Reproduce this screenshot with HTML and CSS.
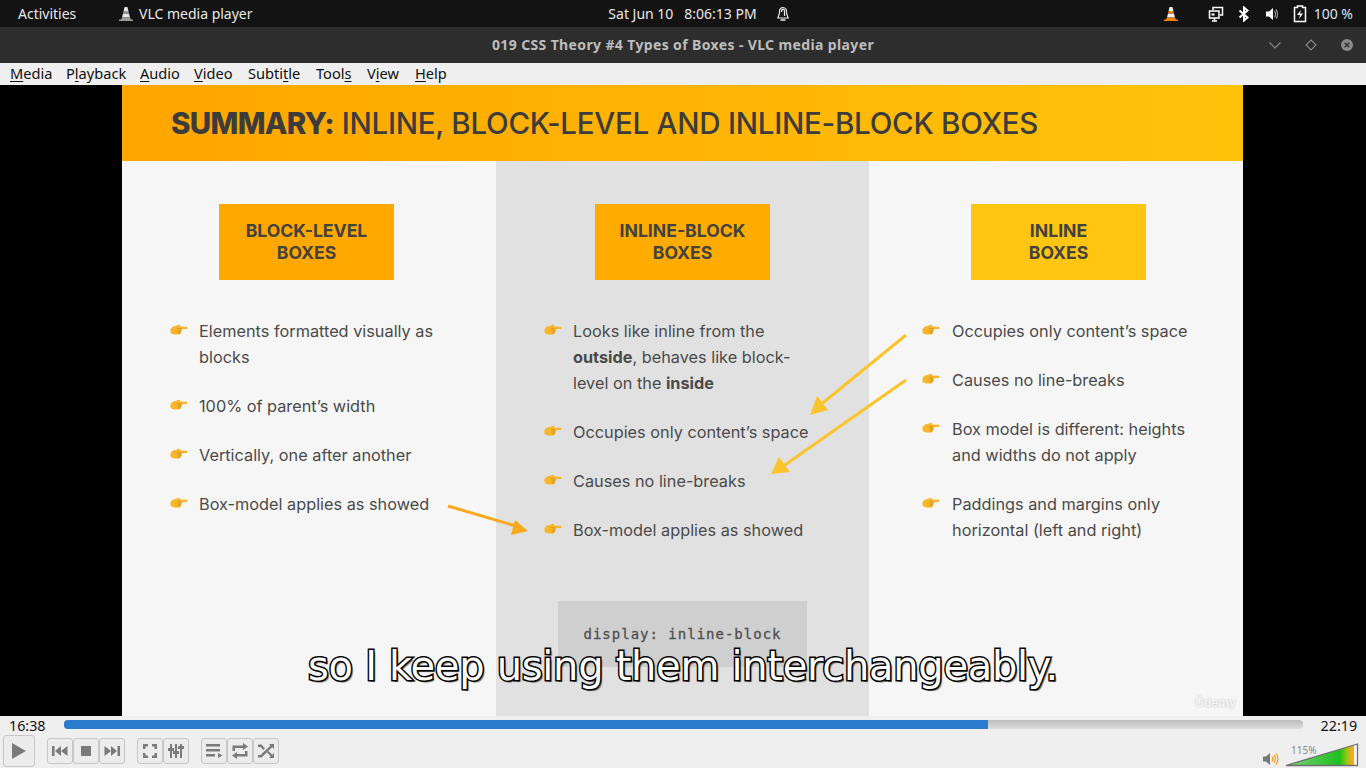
FILE: index.html
```html
<!DOCTYPE html>
<html lang="en">
<head>
<meta charset="utf-8">
<title>VLC media player</title>
<link rel="stylesheet" href="styles.css">
</head>
<body>
<svg class="defs" width="0" height="0" aria-hidden="true">
  <symbol id="hand" viewBox="0 0 18 12">
    <path d="M.5 5.300C1.300 3.300 3.300 2.100 5.600 1.900L9 .8C10 .6 10.600 1.700 10 2.500L16.500 2.700C18 2.800 18 5 16.500 5.100L11.700 5.200C12.100 6 11.900 6.700 11.400 7.100C11.600 7.900 11.200 8.600 10.600 8.800C10.600 9.700 10 10.400 9 10.400H5.500C3.200 10.600 1.100 9.900 .5 8.600Z" fill="#f8b62a"/>
    <path d="M7 4.600C8.200 4.400 9.800 4.600 11.500 5.200M7.500 7C8.800 6.900 10 6.900 11.400 7.100M7.800 8.900L10.600 8.800" fill="none" stroke="#c57f12" stroke-width=".7"/>
  </symbol>
  <symbol id="cone" viewBox="0 0 16 16">
    <path d="M6.600 1h2.800l1 4H5.600zM5 7.500h6l1 4H4z" fill="currentColor"/>
    <path d="M5.600 5h4.800l.6 2.500H5zM4 11.500h8l1 2H15v1.500H1v-1.500h2z" fill="var(--cone2)"/>
  </symbol>
</svg>

<header class="topbar">
  <div class="top-left">
    <span class="activities">Activities</span>
    <span class="app">
      <svg class="app-cone" width="16" height="16"><use href="#cone"/></svg>
      VLC media player
    </span>
  </div>
  <div class="clock">
    <span>Sat Jun 10&nbsp;&nbsp;&nbsp;8:06:13 PM</span>
    <svg width="16" height="16" viewBox="0 0 16 16" fill="none" stroke="#eee" stroke-width="1.200">
      <path d="M8 1.500C5.500 1.500 4.500 3.500 4.500 6C4.500 8.500 3.500 10 2.800 12H13.200C12.500 10 11.500 8.500 11.500 6C11.500 3.500 10.500 1.500 8 1.500Z"/>
      <path d="M6.500 6C6.500 4 7 3.200 8 3.200C9 3.200 9.500 4 9.500 6V10"/>
      <path d="M5.500 14H10.500" stroke-width="1.500"/>
    </svg>
  </div>
  <div class="tray">
    <svg class="tray-cone" width="16" height="16"><use href="#cone"/></svg>
    <svg class="tray-net" width="16" height="16" viewBox="0 0 16 16" fill="none" stroke="#fff" stroke-width="1.500">
      <path d="M5 4V1.500H14.500V9H12"/>
      <rect x="1.500" y="5" width="9.500" height="7"/>
      <path d="M4 15H9M6.500 12V15" />
      <rect x="3.500" y="7.500" width="3" height="2" fill="#fff" stroke="none"/>
    </svg>
    <svg class="tray-bt" width="12" height="16" viewBox="0 0 12 16" fill="none" stroke="#fff" stroke-width="2">
      <path d="M1.500 4.500L9.500 11.500L6 14.500V1.500L9.500 4.500L1.500 11.500"/>
    </svg>
    <svg class="tray-vol" width="14" height="16" viewBox="0 0 14 16">
      <path d="M1 5.500H4L8 2V14L4 10.500H1Z" fill="#fff"/>
      <path d="M9.500 5C10.800 6.500 10.800 9.500 9.500 11M11 3.500C13 5.500 13 10.500 11 12.500" fill="none" stroke="#999" stroke-width="1.200"/>
    </svg>
    <svg class="tray-bat" width="14" height="18" viewBox="0 0 14 18" fill="none">
      <path d="M4.500 1H9.500V2.500H12.500V16.500H1.500V2.500H4.500Z" stroke="#fff" stroke-width="1.500"/>
      <path d="M8 5L4 10H7L6 14L10 8.500H7Z" fill="#fff"/>
    </svg>
    <span class="percent">100 %</span>
  </div>
</header>

<div class="titlebar">
  <span class="title-text">019 CSS Theory #4 Types of Boxes - VLC media player</span>
  <div class="win-buttons">
    <svg width="14" height="14" viewBox="0 0 14 14" fill="none" stroke="#8c8c8c" stroke-width="1.100"><path d="M1.500 4.500L7 10L12.500 4.500"/></svg>
    <svg width="14" height="14" viewBox="0 0 14 14" fill="none" stroke="#8c8c8c" stroke-width="1.100"><path d="M7 2L12 7L7 12L2 7Z"/></svg>
    <svg width="14" height="14" viewBox="0 0 14 14"><circle cx="7" cy="7" r="6" fill="#8a8a8a"/><path d="M4.700 4.700L9.300 9.300M9.300 4.700L4.700 9.300" stroke="#2d2d2d" stroke-width="1.300"/></svg>
  </div>
</div>

<nav class="menubar">
  <span class="m-media"><u>M</u>edia</span>
  <span class="m-playback">P<u>l</u>ayback</span>
  <span class="m-audio"><u>A</u>udio</span>
  <span class="m-video"><u>V</u>ideo</span>
  <span class="m-subtitle">Subti<u>t</u>le</span>
  <span class="m-tools">Tool<u>s</u></span>
  <span class="m-view">V<u>i</u>ew</span>
  <span class="m-help"><u>H</u>elp</span>
</nav>

<main class="video">
  <section class="slide">
    <h1 class="slide-title"><b>SUMMARY:</b> INLINE, BLOCK-LEVEL AND INLINE-BLOCK BOXES</h1>
    <div class="columns">
      <div class="col col-block">
        <div class="box box-block">BLOCK-LEVEL<br>BOXES</div>
        <ul class="points">
          <li><svg class="hand"><use href="#hand"/></svg><span>Elements formatted visually as blocks</span></li>
          <li><svg class="hand"><use href="#hand"/></svg><span>100% of parent’s width</span></li>
          <li><svg class="hand"><use href="#hand"/></svg><span>Vertically, one after another</span></li>
          <li><svg class="hand"><use href="#hand"/></svg><span>Box-model applies as showed</span></li>
        </ul>
      </div>
      <div class="col col-mid">
        <div class="box box-mid">INLINE-BLOCK<br>BOXES</div>
        <ul class="points">
          <li><svg class="hand"><use href="#hand"/></svg><span>Looks like inline from the <b>outside</b>, behaves like block-level on the <b>inside</b></span></li>
          <li><svg class="hand"><use href="#hand"/></svg><span>Occupies only content’s space</span></li>
          <li><svg class="hand"><use href="#hand"/></svg><span>Causes no line-breaks</span></li>
          <li><svg class="hand"><use href="#hand"/></svg><span>Box-model applies as showed</span></li>
        </ul>
        <div class="code">display: inline-block</div>
      </div>
      <div class="col col-inline">
        <div class="box box-inline">INLINE<br>BOXES</div>
        <ul class="points">
          <li><svg class="hand"><use href="#hand"/></svg><span>Occupies only content’s space</span></li>
          <li><svg class="hand"><use href="#hand"/></svg><span>Causes no line-breaks</span></li>
          <li><svg class="hand"><use href="#hand"/></svg><span>Box model is different: heights and widths do not apply</span></li>
          <li><svg class="hand"><use href="#hand"/></svg><span>Paddings and margins only horizontal (left and right)</span></li>
        </ul>
      </div>
    </div>
    <svg class="arrows" width="1121" height="631" viewBox="0 0 1121 631" fill="none" stroke-width="3">
      <path d="M326 421L394 441" stroke="#f9a91c"/>
      <path d="M406 446L389 450L393 435Z" fill="#f9a91c"/>
      <path d="M784 250L697 321" stroke="#fcc42c"/>
      <path d="M688 330L695 311L706 325Z" fill="#fcc42c"/>
      <path d="M784 295L660 382" stroke="#fcc42c"/>
      <path d="M649 389L657 372L668 387Z" fill="#fcc42c"/>
    </svg>
    <span class="watermark">Üdemy</span>
  </section>
  <p class="subtitle">so I keep using them interchangeably.</p>
</main>

<footer class="controls">
  <div class="seek-row">
    <span class="time">16:38</span>
    <div class="seek"><div class="seek-fill"></div></div>
    <span class="time">22:19</span>
  </div>
  <div class="button-row">
    <button class="btn btn-play" aria-label="Play"><svg width="18" height="20" viewBox="0 0 18 20"><path d="M2 2L16 10L2 18Z"/></svg></button>
    <div class="group">
      <button class="btn" aria-label="Previous"><svg width="16" height="12" viewBox="0 0 16 12"><path d="M0 1H2.500V11H0ZM3 6L9 1V11ZM9 6L15.500 1V11Z"/></svg></button>
      <button class="btn" aria-label="Stop"><svg width="12" height="12" viewBox="0 0 12 12"><path d="M1 1H11V11H1Z"/></svg></button>
      <button class="btn" aria-label="Next"><svg width="16" height="12" viewBox="0 0 16 12"><path d="M.5 1L7 6L.5 11ZM7 1L13 6L7 11ZM13.500 1H16V11H13.500Z"/></svg></button>
    </div>
    <div class="group">
      <button class="btn" aria-label="Fullscreen"><svg width="16" height="16" viewBox="0 0 16 16"><path d="M1 1H6V3.500H3.500V6H1ZM10 1H15V6H12.500V3.500H10ZM1 10H3.500V12.500H6V15H1ZM12.500 10H15V15H10V12.500H12.500Z"/></svg></button>
      <button class="btn" aria-label="Extended settings"><svg width="16" height="16" viewBox="0 0 16 16"><path d="M2 1H4V5H6V8H4V15H2V8H0V5H2ZM7 1H9V8H11V11H9V15H7V11H5V8H7ZM12 1H14V3H16V6H14V15H12V6H10V3H12Z"/></svg></button>
    </div>
    <div class="group">
      <button class="btn" aria-label="Playlist"><svg width="18" height="16" viewBox="0 0 18 16"><path d="M1 1H15V3.500H1ZM1 6H15V8.500H1ZM1 11H10V13.500H1ZM13 10L17.500 12.500L13 15Z"/></svg></button>
      <button class="btn" aria-label="Loop"><svg width="18" height="16" viewBox="0 0 18 16"><path d="M12 0L17 3.500L12 7V5H4V8H1.500V2.500H12ZM6 16L1 12.500L6 9V11H14V8H16.500V13.500H6Z"/></svg></button>
      <button class="btn" aria-label="Random"><svg width="18" height="16" viewBox="0 0 18 16"><path d="M1 1.500H4.500L8 5.500L6.500 7L3.500 4H1ZM12 1H17V6L15.200 4.300L4.500 14.500H1V12H3.500L13.500 2.600ZM10 9.500L11.500 8L15.200 11.700L17 10V15H12L13.600 13.300Z"/></svg></button>
    </div>
    <div class="volume">
      <svg class="speaker" width="16" height="14" viewBox="0 0 16 14">
        <path d="M0 4.500H3L7 1V13L3 9.500H0Z" fill="#777"/>
        <path d="M9 4.500C10 6 10 8 9 9.500M11 3C12.700 5.500 12.700 8.500 11 11M13 1.500C15.500 5 15.500 9 13 12.500" fill="none" stroke="#f39a1e" stroke-width="1.200"/>
      </svg>
      <div class="vol-track">
        <span class="vol-label">115%</span>
        <svg width="74" height="24" viewBox="0 0 74 24">
          <defs>
            <linearGradient id="vol" x1="0" y1="0" x2="1" y2="0">
              <stop offset="0" stop-color="#7ed27a"/>
              <stop offset=".75" stop-color="#1fbf1f"/>
              <stop offset=".85" stop-color="#8ccb10"/>
              <stop offset=".92" stop-color="#ffa51e"/>
              <stop offset=".95" stop-color="#ffa51e"/>
              <stop offset=".951" stop-color="#fafafa"/>
            </linearGradient>
          </defs>
          <path d="M1 22.500L72.500 1V22.500Z" fill="url(#vol)" stroke="#6e6e6e" stroke-width="1.300"/>
        </svg>
      </div>
    </div>
  </div>
</footer>
</body>
</html>
```
FILE: styles.css
```css
* { box-sizing: border-box; }
html, body { margin: 0; height: 100%; }
body {
  width: 1366px;
  height: 768px;
  overflow: hidden;
  display: flex;
  flex-direction: column;
  font-family: "Noto Sans", sans-serif;
  background: #000;
}
.defs { display: block; height: 0; flex: none; }

/* GNOME top bar */
.topbar {
  height: 27px;
  flex: none;
  background: #131313;
  color: #e8e8e8;
  font-size: 14px;
  display: grid;
  grid-template-columns: 1fr auto 1fr;
  align-items: center;
}
.top-left { display: flex; align-items: center; padding-left: 18px; }
.activities { width: 100px; }
.app { display: flex; align-items: center; gap: 5px; color: #e8e8e8; }
.app-cone { color: #e8e8e8; --cone2: #9a9a9a; }
.clock { display: flex; align-items: center; gap: 18px; padding-left: 33px; }
.tray { display: flex; align-items: center; justify-content: flex-end; padding-right: 13px; }
.tray-cone { color: #f4f4f4; --cone2: #e8830c; margin-right: 29px; }
.tray-net { margin-right: 14px; }
.tray-bt { margin-right: 15px; }
.tray-vol { margin-right: 14px; }
.tray-bat { margin-right: 7px; }
.percent { color: #d5e6f5; }

/* Window title */
.titlebar {
  height: 36px;
  flex: none;
  position: relative;
  background: #2d2d2d;
  display: flex;
  align-items: center;
  justify-content: center;
  padding-bottom: 2px;
}
.title-text { color: #bdbdbd; font-size: 14px; font-weight: 700; letter-spacing: .37px; }
.win-buttons {
  position: absolute;
  right: 12px;
  top: 11px;
  display: flex;
  gap: 22px;
}
.win-buttons svg { display: block; }

/* Menu */
.menubar {
  height: 22px;
  flex: none;
  background: #efefef;
  color: #111;
  font-size: 14.600px;
  display: flex;
  align-items: center;
  padding: 0 0 2px 10px;
}
.menubar u { text-underline-offset: 2px; }
.m-media { width: 56px; }
.m-playback { width: 74px; }
.m-audio { width: 54px; }
.m-video { width: 54px; }
.m-subtitle { width: 68px; }
.m-tools { width: 51px; }
.m-view { width: 48px; }

/* Video */
.video {
  flex: 1;
  position: relative;
  background: #000;
  display: flex;
  padding-left: 122px;
  min-height: 0;
}
.slide {
  width: 1121px;
  height: 631px;
  position: relative;
  display: flex;
  flex-direction: column;
  background: #f6f6f6;
  font-family: Inter, sans-serif;
  color: #4a4a4a;
}
.slide-title {
  height: 76px;
  flex: none;
  margin: 0;
  padding-left: 49px;
  display: flex;
  align-items: center;
  white-space: pre;
  background: linear-gradient(90deg, #ffa500, #ffc30a);
  color: #3c3c3c;
  font-size: 29.500px;
  font-weight: 500;
  letter-spacing: -.25px;
}
.slide-title b { font-weight: 800; letter-spacing: -.7px; }
.columns { flex: 1; display: grid; grid-template-columns: 374px 373px 374px; min-height: 0; }
.col { padding-top: 43px; display: flex; flex-direction: column; }
.col-block { padding-left: 48px; }
.col-mid { padding-left: 48px; background: #e1e1e1; }
.col-inline { padding-left: 53px; }
.box {
  width: 175px;
  height: 76px;
  padding-top: .6px;
  display: flex;
  align-items: center;
  justify-content: center;
  text-align: center;
  color: #424242;
  font-size: 17.600px;
  font-weight: 700;
  line-height: 22px;
}
.box-block { margin-left: 49px; background: #ffa800; }
.box-mid { margin-left: 51px; background: #ffab00; }
.box-inline { margin-left: 49px; background: #ffc510; }
.points {
  list-style: none;
  margin: 38px 0 0;
  padding: 0;
  display: flex;
  flex-direction: column;
  gap: 23px;
  font-size: 16.300px;
  line-height: 26px;
}
.points li { display: flex; align-items: flex-start; }
.points b { font-weight: 700; }
.hand { width: 18px; height: 12px; flex: none; margin: 6px 11px 0 0; }
.col-block .points span { width: 250px; }
.col-mid .points span { width: 245px; }
.col-inline .points span { width: 250px; }
.col-inline .hand { margin-right: 12px; }
.code {
  margin: auto 0 49px 14px;
  width: 249px;
  height: 66px;
  background: #cfcfcf;
  color: #4f4f4f;
  font-family: "DejaVu Sans Mono", monospace;
  font-size: 14px;
  letter-spacing: 1px;
  -webkit-text-stroke: .3px #4f4f4f;
  display: flex;
  align-items: center;
  justify-content: center;
}
.arrows { position: absolute; left: 0; top: 0; pointer-events: none; }
.watermark {
  position: absolute;
  right: 7px;
  bottom: 6px;
  font-size: 12px;
  font-weight: 600;
  color: #f4f4f4;
  text-shadow: 0 0 2px #bbb;
}
.subtitle {
  position: absolute;
  left: 0;
  right: 0;
  top: 555px;
  margin: 0;
  text-align: center;
  font-family: "DejaVu Sans", sans-serif;
  font-size: 40px;
  line-height: 52px;
  color: #fff;
  letter-spacing: -.3px;
  -webkit-text-stroke: 3px #000;
  paint-order: stroke fill;
  text-shadow: 2px 2px 1px rgba(0, 0, 0, .55);
}

/* Controls */
.controls {
  height: 52px;
  flex: none;
  background: #efefef;
  padding: 1px 0 0 3px;
}
.seek-row { display: flex; align-items: center; height: 15px; color: #111; font-size: 14.300px; padding: 1px 8px 0 6px; }
.seek {
  width: 1239px;
  height: 9px;
  margin: -2px 18px 0 18px;
  border-radius: 4px;
  background: linear-gradient(#bdbdbd, #dcdcdc);
  overflow: hidden;
}
.seek-fill { width: 924px; height: 100%; background: #2a7bcd; }
.button-row { display: flex; align-items: flex-end; margin-top: 3px; height: 32px; }
.group { display: flex; margin: 0 0 3px 12px; }
.btn {
  width: 26px;
  height: 26px;
  padding: 0;
  display: flex;
  align-items: center;
  justify-content: center;
  background: #ececec;
  border: 1px solid #c6c6c6;
  border-radius: 3px;
}
.btn svg { fill: #7a7a7a; display: block; }
.btn-play { width: 32px; height: 32px; }
.volume { margin-left: auto; display: flex; align-items: flex-end; padding-right: 7px; }
.speaker { margin: 0 6px 1px 0; }
.vol-track { position: relative; height: 24px; }
.vol-track svg { display: block; }
.vol-label { position: absolute; left: 6px; top: 0; font-size: 10px; color: #8a8a8a; }
```
